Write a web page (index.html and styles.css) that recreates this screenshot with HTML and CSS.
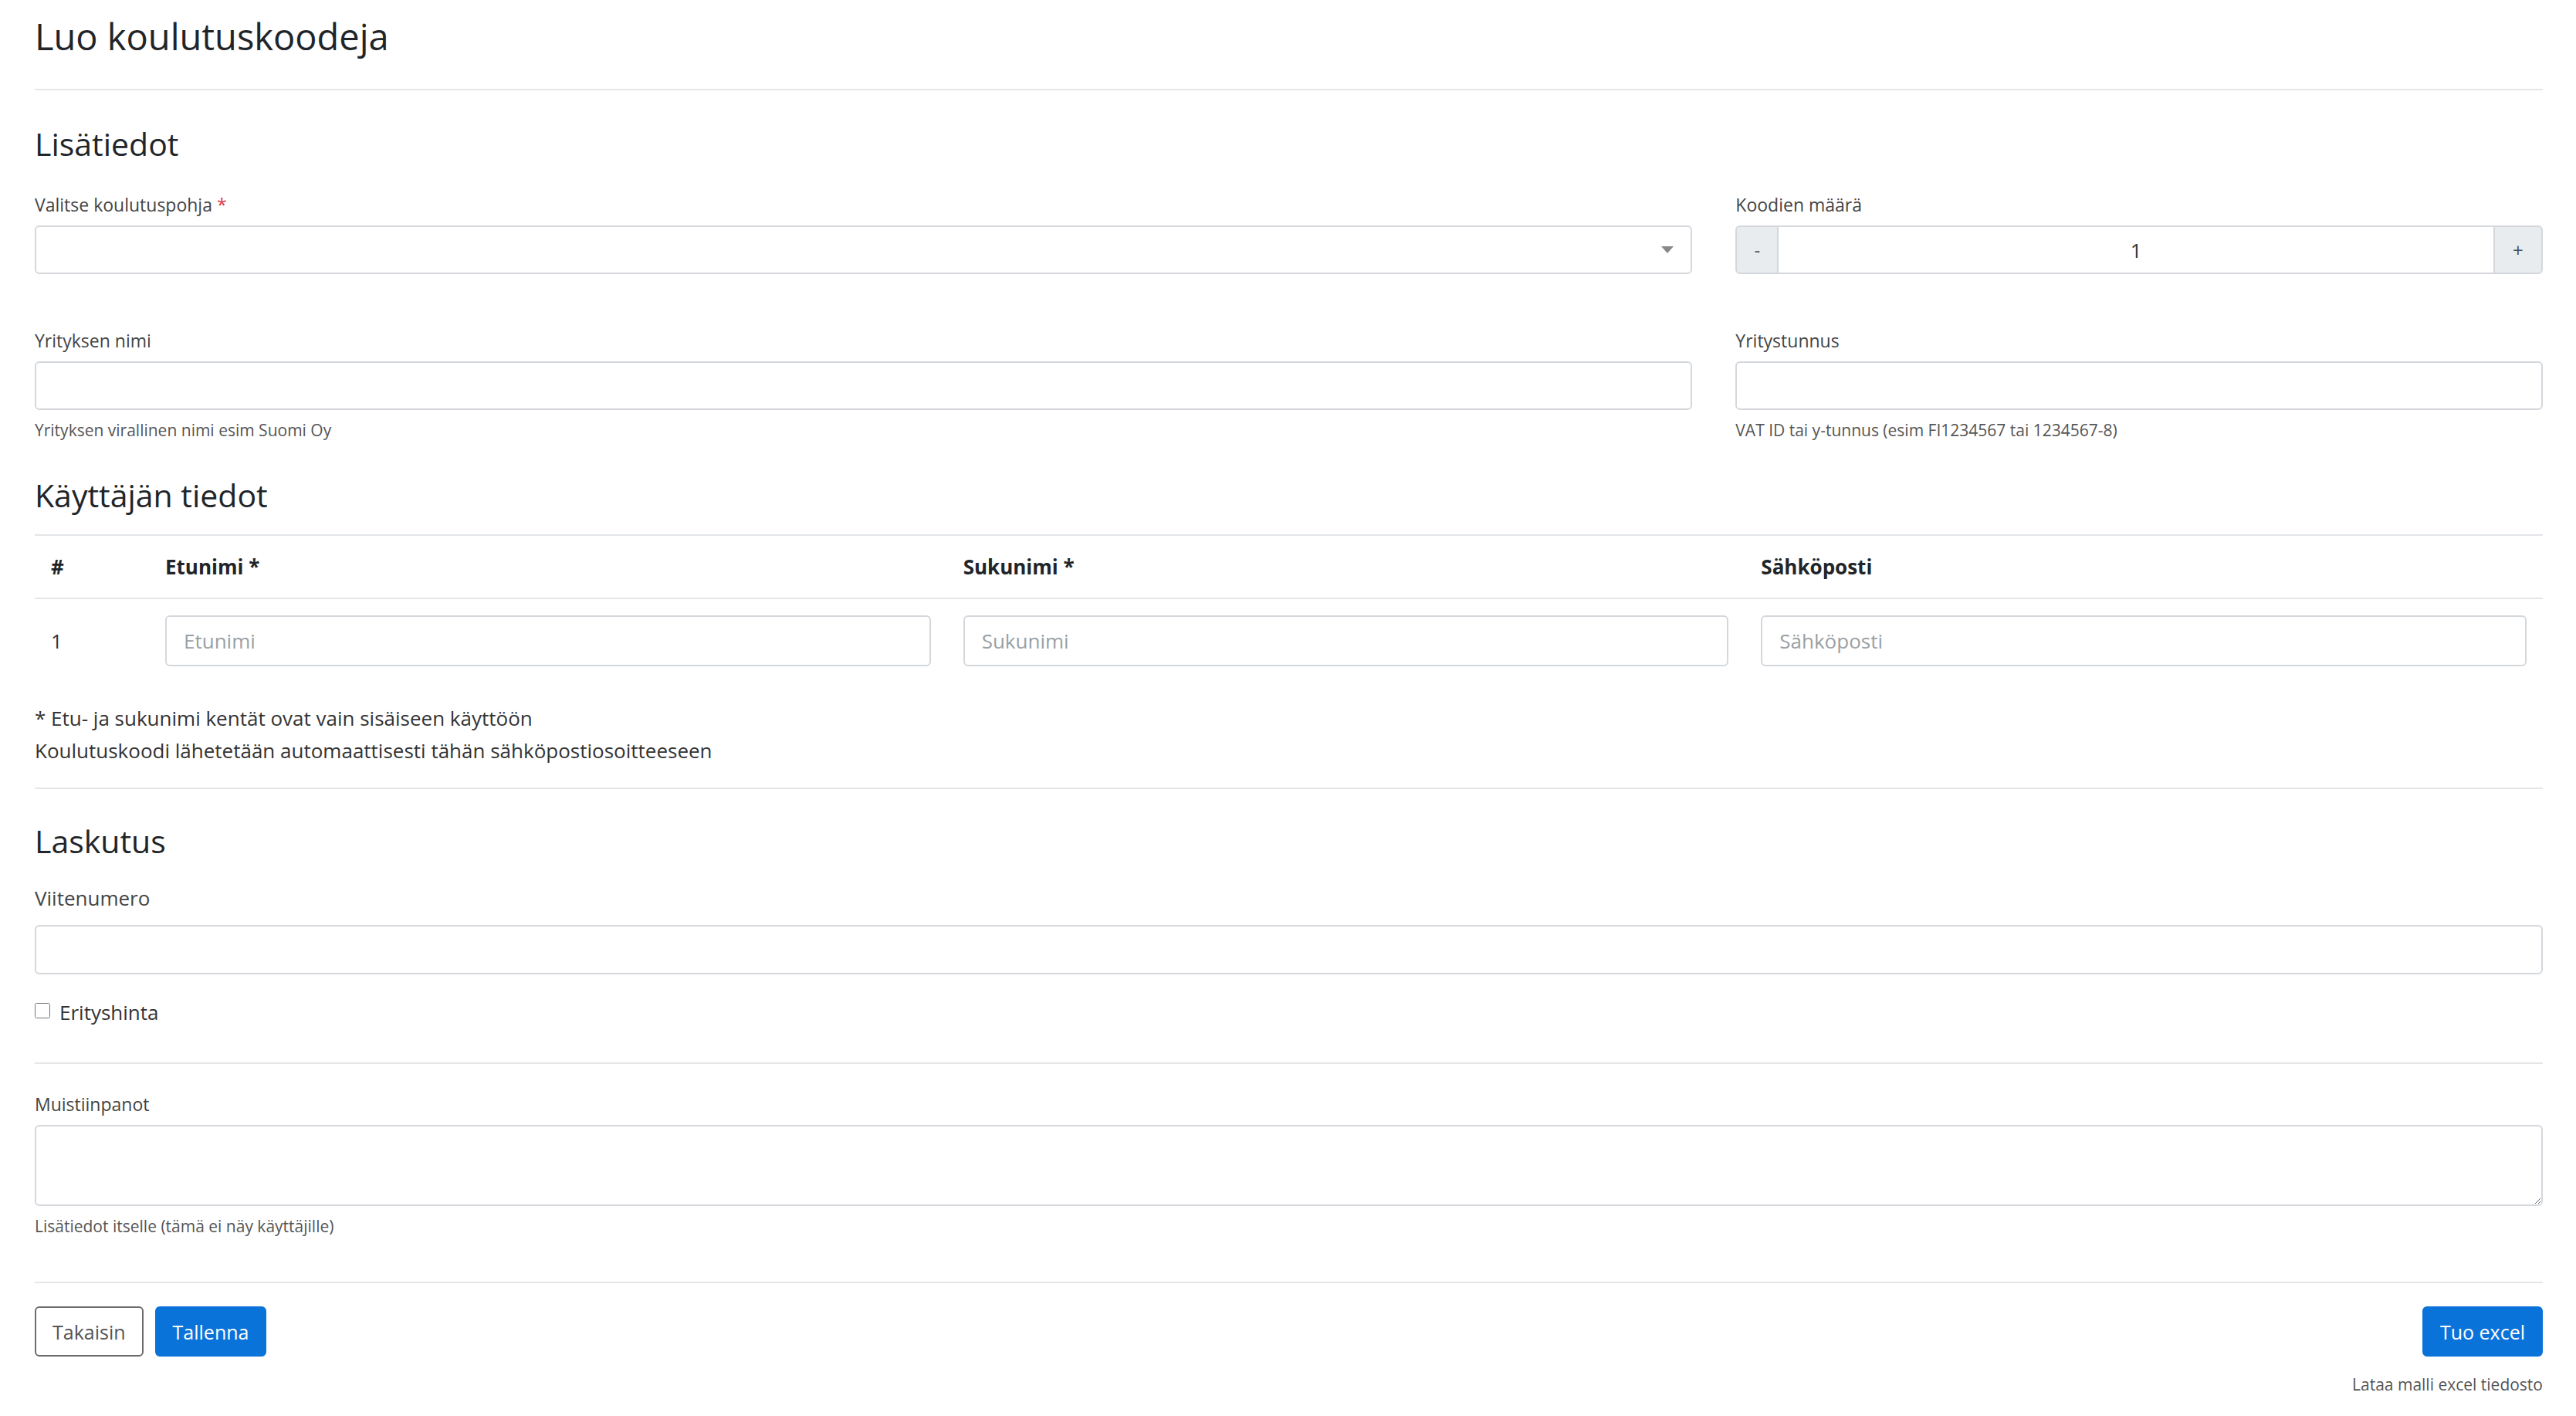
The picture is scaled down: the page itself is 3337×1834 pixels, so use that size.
FILE: index.html
```html
<!DOCTYPE html>
<html lang="fi">

<head>
    <meta charset="UTF-8">
    <meta name="viewport" content="width=device-width, initial-scale=1.0">
    <title>Luo koulutuskoodeja</title>
    <link rel="stylesheet" href="styles.css">
</head>

<body>
    <div class="page">
        <h1 class="page-title">Luo koulutuskoodeja</h1>
        <hr class="rule rule-title">

        <h2 class="section-title first">Lisätiedot</h2>
        <div class="row row-template">
            <div class="col col-wide">
                <label class="field-label">Valitse koulutuspohja <span class="req">*</span></label>
                <div class="select-box"><span class="caret"></span></div>
            </div>
            <div class="col col-narrow">
                <label class="field-label">Koodien määrä</label>
                <div class="input-group">
                    <button class="step-btn step-minus" type="button">-</button>
                    <input class="form-input counter" type="text" value="1">
                    <button class="step-btn step-plus" type="button">+</button>
                </div>
            </div>
        </div>

        <div class="row row-company">
            <div class="col col-wide">
                <label class="field-label">Yrityksen nimi</label>
                <input class="form-input" type="text">
                <small class="form-help">Yrityksen virallinen nimi esim Suomi Oy</small>
            </div>
            <div class="col col-narrow">
                <label class="field-label">Yritystunnus</label>
                <input class="form-input" type="text">
                <small class="form-help">VAT ID tai y-tunnus (esim FI1234567 tai 1234567-8)</small>
            </div>
        </div>

        <h2 class="section-title users-title">Käyttäjän tiedot</h2>
        <table class="users-table">
            <colgroup>
                <col class="col-num">
                <col>
                <col>
                <col>
            </colgroup>
            <thead>
                <tr>
                    <th>#</th>
                    <th>Etunimi *</th>
                    <th>Sukunimi *</th>
                    <th>Sähköposti</th>
                </tr>
            </thead>
            <tbody>
                <tr>
                    <td>1</td>
                    <td><input class="form-input table-input" type="text" placeholder="Etunimi"></td>
                    <td><input class="form-input table-input" type="text" placeholder="Sukunimi"></td>
                    <td><input class="form-input table-input" type="text" placeholder="Sähköposti"></td>
                </tr>
            </tbody>
        </table>
        <p class="note">* Etu- ja sukunimi kentät ovat vain sisäiseen käyttöön<br>Koulutuskoodi lähetetään automaattisesti tähän sähköpostiosoitteeseen</p>

        <hr class="rule rule-note">

        <h2 class="section-title billing-title">Laskutus</h2>
        <label class="field-label field-label-lg">Viitenumero</label>
        <input class="form-input ref-input" type="text">
        <label class="check"><input type="checkbox"> Erityshinta</label>

        <hr class="rule rule-check">

        <label class="field-label notes-label">Muistiinpanot</label>
        <textarea class="form-input notes"></textarea>
        <small class="form-help">Lisätiedot itselle (tämä ei näy käyttäjille)</small>

        <hr class="rule rule-actions">

        <div class="actions">
            <div class="actions-left">
                <button class="btn btn-outline" type="button">Takaisin</button>
                <button class="btn btn-primary" type="button">Tallenna</button>
            </div>
            <div class="actions-right">
                <button class="btn btn-primary" type="button">Tuo excel</button>
                <a class="template-link" href="#">Lataa malli excel tiedosto</a>
            </div>
        </div>
    </div>
</body>

</html>
```

FILE: styles.css
```css
* {
    box-sizing: border-box;
}

body {
    margin: 0;
    font-family: "Open Sans", "Noto Sans", Arial, sans-serif;
    color: #212529;
    background: #fff;
    overflow: hidden;
}

.page {
    padding: 19px 43px 0 45px;
}

.page-title {
    margin: 0;
    font-size: 47px;
    font-weight: 500;
    line-height: 56px;
}

.rule {
    margin: 0;
    border: 0;
    border-top: 2px solid #e6e6e6;
}

.rule-title {
    margin-top: 40px;
}

.section-title {
    margin: 0;
    font-size: 41px;
    font-weight: 500;
    line-height: 50px;
}

.section-title.first {
    margin-top: 44px;
}

/* two column rows */
.row {
    display: flex;
    margin: 0 -28px;
}

.col {
    padding: 0 28px;
}

.col-wide {
    width: 66.6667%;
}

.col-narrow {
    width: 33.3333%;
}

.row-template {
    margin-top: 38px;
}

.row-company {
    margin-top: 70px;
}

.field-label {
    display: block;
    margin-bottom: 10px;
    font-size: 23px;
    line-height: 33px;
    color: #444;
}

.field-label-lg {
    font-size: 26px;
    line-height: 39px;
    margin-top: 30px;
    margin-bottom: 15px;
}

.req {
    color: #dc3545;
}

.form-input {
    display: block;
    width: 100%;
    height: 63px;
    padding: 0 22px;
    font-family: inherit;
    font-size: 26px;
    color: #495057;
    background: #fff;
    border: 2px solid #d4d8dc;
    border-radius: 6px;
    outline: none;
}

.form-input::placeholder {
    color: #9a9fa5;
}

.select-box {
    display: flex;
    align-items: center;
    justify-content: flex-end;
    height: 63px;
    padding-right: 22px;
    border: 2px solid #d4d8dc;
    border-radius: 6px;
}

.caret {
    width: 0;
    height: 0;
    border-left: 8px solid transparent;
    border-right: 8px solid transparent;
    border-top: 9px solid #888;
}

.input-group {
    display: flex;
    height: 63px;
}

.step-btn {
    flex: none;
    font-family: inherit;
    font-size: 24px;
    color: #495057;
    background: #e9ecef;
    border: 2px solid #d4d8dc;
}

.step-minus {
    width: 56px;
    border-radius: 6px 0 0 6px;
}

.step-plus {
    width: 64px;
    border-radius: 0 6px 6px 0;
}

.counter {
    flex: 1;
    height: 63px;
    text-align: center;
    border-radius: 0;
    border-left: 0;
    border-right: 0;
    color: #333;
}

.form-help {
    display: block;
    margin-top: 12px;
    font-size: 21px;
    line-height: 28px;
    color: #555;
}

/* users table */
.users-title {
    margin-top: 45px;
}

.users-table {
    width: 100%;
    margin-top: 26px;
    border-collapse: collapse;
    table-layout: fixed;
}

.col-num {
    width: 148px;
}

.users-table th,
.users-table td {
    padding: 21px;
    font-size: 26px;
    text-align: left;
    vertical-align: middle;
}

.users-table th {
    line-height: 38px;
    font-weight: 700;
    border-top: 2px solid #e3e6e9;
    border-bottom: 2px solid #e3e6e9;
}

.users-table td {
    color: #333;
}

.table-input {
    height: 66px;
}

.note {
    margin: 25px 0 0;
    font-size: 26px;
    line-height: 42px;
    color: #333;
}

.rule-note {
    margin-top: 27px;
}

.billing-title {
    margin-top: 42px;
}

.ref-input {
    height: 64px;
}

.check {
    display: flex;
    align-items: center;
    gap: 12px;
    margin-top: 30px;
    font-size: 26px;
    line-height: 39px;
    color: #333;
}

.check input {
    width: 20px;
    height: 20px;
    margin: -6px 0 0;
}

.rule-check {
    margin-top: 45px;
}

.notes-label {
    margin-top: 36px;
}

.notes {
    height: 105px;
    padding-top: 12px;
    resize: vertical;
}

.rule-actions {
    margin-top: 58px;
}

.actions {
    display: flex;
    justify-content: space-between;
    align-items: flex-start;
    margin-top: 30px;
}

.actions-left {
    display: flex;
    gap: 15px;
}

.actions-right {
    display: flex;
    flex-direction: column;
    align-items: flex-end;
}

.btn {
    height: 65px;
    padding: 0 21px;
    font-family: inherit;
    font-size: 25px;
    border-radius: 6px;
    cursor: pointer;
}

.btn-outline {
    color: #555;
    background: #fff;
    border: 2px solid #6c6c6c;
}

.btn-primary {
    color: #fff;
    background: #0a73d9;
    border: 2px solid #0a73d9;
}

.template-link {
    margin-top: 22px;
    font-size: 21px;
    line-height: 28px;
    color: #555;
    text-decoration: none;
}
```
